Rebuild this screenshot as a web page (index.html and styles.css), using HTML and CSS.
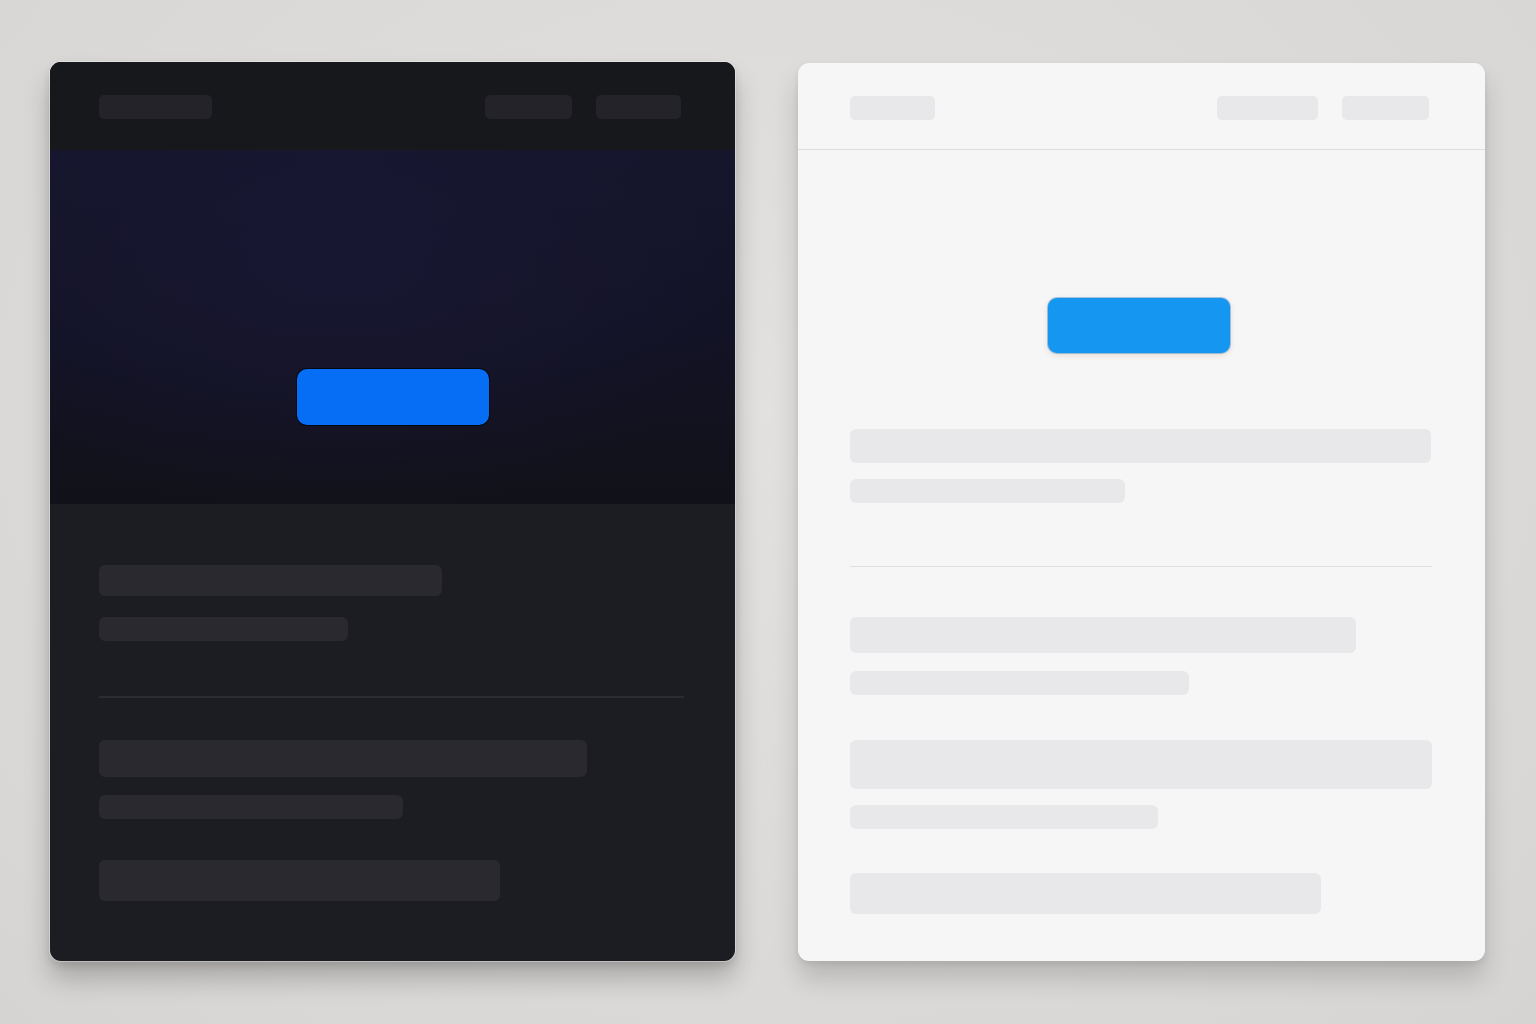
FILE: index.html
```html
<!DOCTYPE html>
<html lang="en">
<head>
<meta charset="utf-8">
<title>Theme preview</title>
<link rel="stylesheet" href="styles.css">
</head>
<body>
<main class="stage">
  <section class="card card--dark">
    <header class="card__head">
      <span class="pill pill--logo"></span>
      <nav class="card__nav">
        <span class="pill pill--nav-a"></span>
        <span class="pill pill--nav-b"></span>
      </nav>
    </header>
    <div class="hero">
      <span class="cta cta--dark"></span>
    </div>
    <div class="card__body">
      <span class="bar bar--d1"></span>
      <span class="bar bar--d2"></span>
      <hr class="rule">
      <span class="bar bar--d3"></span>
      <span class="bar bar--d4"></span>
      <span class="bar bar--d5"></span>
    </div>
  </section>

  <section class="card card--light">
    <header class="card__head">
      <span class="pill pill--logo"></span>
      <nav class="card__nav">
        <span class="pill pill--nav-a"></span>
        <span class="pill pill--nav-b"></span>
      </nav>
    </header>
    <div class="card__body">
      <span class="cta cta--light"></span>
      <span class="bar bar--l1"></span>
      <span class="bar bar--l2"></span>
      <hr class="rule">
      <span class="bar bar--l3"></span>
      <span class="bar bar--l4"></span>
      <span class="bar bar--l5"></span>
      <span class="bar bar--l6"></span>
      <span class="bar bar--l7"></span>
    </div>
  </section>
</main>
</body>
</html>
```

FILE: styles.css
```css
* { box-sizing: border-box; }

html, body {
  margin: 0;
  height: 100%;
}

body {
  background: radial-gradient(ellipse at 50% 40%, #e2e1df 0%, #dad9d7 70%, #d5d4d2 100%);
  font-family: "Inter", "Liberation Sans", sans-serif;
}

.stage {
  display: flex;
  align-items: flex-start;
  gap: 63px;
  padding: 62px 0 0 50px;
}

/* ---- card shell ---- */
.card {
  display: flex;
  flex-direction: column;
  height: 899px;
  border-radius: 11px;
  overflow: hidden;
}

.card--dark {
  width: 685px;
  background: #1c1d22;
  box-shadow: 0 0 0 1px rgba(255,255,255,0.35), 0 18px 26px rgba(0,0,0,0.22), 0 4px 8px rgba(0,0,0,0.12);
}

.card--light {
  width: 687px;
  margin-top: 1px;
  height: 898px;
  background: #f7f6f6;
  box-shadow: 0 18px 26px rgba(0,0,0,0.16), 0 3px 6px rgba(0,0,0,0.08);
}

/* ---- header ---- */
.card__head {
  display: flex;
  align-items: center;
  justify-content: space-between;
  flex: none;
}

.card--dark .card__head {
  height: 88px;
  padding: 2px 54px 0 49px;
  background: #17181c;
}

.card--light .card__head {
  height: 87px;
  padding: 3px 56px 0 52px;
  border-bottom: 1px solid #dedede;
}

.card__nav {
  display: flex;
}

.pill {
  display: block;
  height: 24px;
  border-radius: 5px;
}

.card--dark .pill { background: #232329; }
.card--light .pill { background: #e8e8ea; }

.card--dark .pill--logo { width: 113px; }
.card--dark .pill--nav-a { width: 87px; }
.card--dark .pill--nav-b { width: 85px; margin-left: 24px; }

.card--light .pill--logo { width: 85px; }
.card--light .pill--nav-a { width: 101px; }
.card--light .pill--nav-b { width: 87px; margin-left: 24px; }

/* ---- dark hero ---- */
.hero {
  flex: none;
  height: 354px;
  display: flex;
  justify-content: center;
  padding: 219px 0 0 1px;
  background:
    radial-gradient(ellipse 420px 260px at 42% 30%, rgba(26, 24, 54, 0.7) 0%, rgba(26, 24, 54, 0) 100%),
    linear-gradient(180deg, #15152c 0%, #131326 50%, #111119 100%);
}

.cta {
  display: block;
  flex: none;
}

.cta--dark {
  width: 192px;
  height: 56px;
  border-radius: 10px;
  background: #066df5;
  box-shadow: 0 0 0 1px rgba(0,0,0,0.6);
}

.cta--light {
  align-self: center;
  margin: 148px 0 0 -5px;
  width: 182px;
  height: 55px;
  border-radius: 9px;
  background: #1596f0;
  box-shadow: 0 2px 6px rgba(120, 90, 40, 0.18), 0 0 0 1px rgba(10, 110, 200, 0.35);
}

/* ---- body content ---- */
.card__body {
  display: flex;
  flex-direction: column;
  align-items: flex-start;
}

.card--dark .card__body { padding: 61px 51px 0 49px; }
.card--light .card__body { padding: 0 53px 0 52px; }

.bar {
  display: block;
  border-radius: 6px;
}

.card--dark .bar { background: #29292f; }
.card--light .bar { background: #e8e8ea; }

.rule {
  align-self: stretch;
  margin: 0;
  border: 0;
}

.card--dark .rule { height: 2px; background: #2b2c32; margin-top: 55px; }
.card--light .rule { height: 1px; background: #dfdfe0; margin-top: 63px; }

/* dark bars */
.bar--d1 { width: 343px; height: 31px; }
.bar--d2 { width: 249px; height: 24px; margin-top: 21px; }
.bar--d3 { width: 488px; height: 37px; margin-top: 42px; }
.bar--d4 { width: 304px; height: 24px; margin-top: 18px; }
.bar--d5 { width: 401px; height: 41px; margin-top: 41px; }

/* light bars */
.bar--l1 { width: 581px; height: 34px; margin-top: 76px; }
.bar--l2 { width: 275px; height: 24px; margin-top: 16px; }
.bar--l3 { width: 506px; height: 36px; margin-top: 50px; }
.bar--l4 { width: 339px; height: 24px; margin-top: 18px; }
.bar--l5 { width: 582px; height: 49px; margin-top: 45px; }
.bar--l6 { width: 308px; height: 24px; margin-top: 16px; }
.bar--l7 { width: 471px; height: 41px; margin-top: 44px; }
```
